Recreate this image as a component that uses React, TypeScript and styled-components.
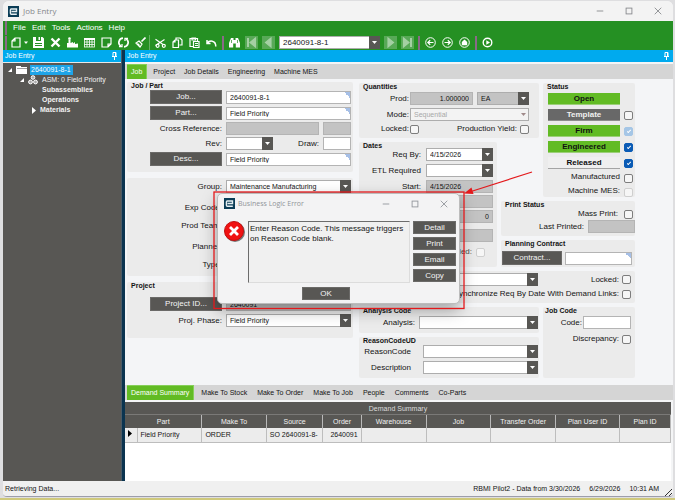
import React from "react";
import styled, { createGlobalStyle, css } from "styled-components";

const GREEN = "#259023";
const LIME = "#62bb24";
const BLUE = "#00aaee";
const DARK = "#585754";
const SANS = '"Liberation Sans", Arial, sans-serif';
const TITLE_FONT = '"Open Sans", "Noto Sans", sans-serif';

const Global = createGlobalStyle`
  *, *::before, *::after { box-sizing: border-box; }
  body { margin: 0; background: #dcdcdc; font: 8px/10px ${SANS}; color: #141414; }
  button, input, select { font: inherit; color: inherit; margin: 0; padding: 0; border-radius: 0; }
`;

/* ---------- window frame ---------- */
const Desktop = styled.div`
  position: relative;
  display: flex;
  min-height: 100vh;
  padding: 1px 2px 3px 3px;
  background: linear-gradient(#dedee0 calc(100% - 2px), #cfc97c calc(100% - 2px));
`;
const AppWindow = styled.main`
  flex: 1;
  min-width: 0;
  display: flex;
  flex-direction: column;
  background: #f4f5f6;
  border-radius: 6px 6px 4px 4px;
  border-bottom: 1px solid #9d9dab;
  overflow: hidden;
`;
const TitleBar = styled.header`
  display: flex;
  align-items: center;
  height: 20px;
  padding: 0 11px 0 5px;
  gap: 4px;
  background: #f3f3f3;
  color: #85878b;
  font-family: ${TITLE_FONT};
`;
const TitleText = styled.h1<{ $small?: boolean }>`
  flex: 1;
  margin: 0;
  font-size: ${(p) => (p.$small ? 7 : 8)}px;
  font-weight: 400;
`;
const CaptionButtons = styled.div`
  display: flex;
  gap: 21px;
`;
const PlainButton = styled.button`
  display: flex;
  align-items: center;
  justify-content: center;
  border: 0;
  background: none;
  color: inherit;
`;

/* ---------- menu and toolbar ---------- */
const MenuBar = styled.nav`
  display: flex;
  align-items: center;
  height: 14px;
  padding: 0 2px;
  background: ${GREEN};
  color: #fff;
`;
const MenuItem = styled.button`
  border: 0;
  background: none;
  padding: 0 0 0 6px;
`;
const Grip = styled.span`
  width: 2px;
  height: 14px;
  background: #8a6a88;
`;
const Separator = styled.span`
  width: 1px;
  height: 15px;
  margin-left: -2px;
  background: #64b062;
`;
const Toolbar = styled.div`
  display: flex;
  align-items: center;
  gap: 4px;
  height: 15px;
  padding-left: 2px;
  background: ${GREEN};
  color: #fff;
`;
const ToolButton = styled(PlainButton)<{ $wide?: boolean; $dim?: boolean }>`
  width: ${(p) => (p.$wide ? 17 : 13)}px;
  height: 13px;
  ${(p) => p.$dim && css`background: #58a957; color: #a4d0a3;`}
`;

/* ---------- body ---------- */
const Body = styled.div`
  flex: 1;
  display: flex;
  min-height: 0;
`;
const Sidebar = styled.aside`
  width: 118px;
  display: flex;
  flex-direction: column;
  background: ${DARK};
`;
const Splitter = styled.div`
  width: 4px;
  background: #0b3450;
  border-left: 1px solid #4a5a66;
`;
const Workspace = styled.section`
  flex: 1;
  min-width: 0;
  display: flex;
  flex-direction: column;
`;
const PaneHeader = styled.div`
  display: flex;
  align-items: center;
  justify-content: space-between;
  height: 12px;
  padding: 0 4px 0 2px;
  background: ${BLUE};
  color: #fff;
  font-size: 7px;
`;
const Tree = styled.ul`
  list-style: none;
  margin: 0;
  padding: 2px 0;
  border-top: 1px solid #e8e8e8;
  color: #f2f2f2;
`;
const TreeRow = styled.li<{ $indent: number; $bold?: boolean }>`
  display: flex;
  align-items: center;
  gap: 4px;
  height: 10px;
  padding-left: ${(p) => p.$indent}px;
  font-weight: ${(p) => (p.$bold ? 700 : 400)};
  font-size: 7px;
`;
const Selected = styled.span`
  padding: 0 2px 0 1px;
  margin-left: -1px;
  background: #1ea4e8;
  color: #fff;
`;

const TabStrip = styled.div<{ $gap: number; $top?: number }>`
  display: flex;
  align-items: center;
  gap: ${(p) => p.$gap}px;
  height: 15px;
  margin-top: ${(p) => p.$top ?? 0}px;
  padding-left: 2px;
  background: #d5d5d5;
`;
const Tab = styled.button<{ $active?: boolean }>`
  border: 0;
  background: none;
  height: 100%;
  font-size: 7px;
  white-space: nowrap;
  ${(p) => p.$active && css`
    background: ${LIME};
    color: #fff;
    padding: 0 4px;
    margin-right: -3px;
    border: solid #86cf58;
    border-width: 1px 1px 0 0;
  `}
`;

/* ---------- form ---------- */
const FormArea = styled.form`
  flex: 1;
  display: flex;
  align-items: flex-start;
  gap: 6px;
  padding: 3px 2px 6px;
  background: #f4f5f7;
`;
const LeftColumn = styled.div`
  width: 226px;
  display: flex;
  flex-direction: column;
  gap: 6px;
`;
const RightGrid = styled.div`
  display: grid;
  grid-template-columns: 138px 38px 92px;
  grid-template-rows: 55px 55px 35px 27px 32px 26px 41px;
  gap: 4px;
  margin-top: 1px;
`;
const Panel = styled.section<{ $area?: string; $pad?: string; $h?: number; $gap?: number }>`
  display: flex;
  flex-direction: column;
  gap: ${(p) => p.$gap ?? 0}px;
  grid-area: ${(p) => p.$area ?? "auto"};
  min-height: ${(p) => p.$h ?? 0}px;
  padding: ${(p) => p.$pad ?? "0"};
  background: #ebebeb;
  border-radius: 2px;
`;
const PanelTitle = styled.h2<{ $x?: number; $h?: number }>`
  margin: 0;
  padding-left: ${(p) => p.$x ?? 4}px;
  height: ${(p) => p.$h ?? 8}px;
  font-size: 7px;
  line-height: 8px;
  font-weight: 700;
  white-space: nowrap;
`;
const Fields = styled.div<{ $cols: string; $rows: string; $gap?: string }>`
  display: grid;
  grid-template-columns: ${(p) => p.$cols};
  grid-template-rows: ${(p) => p.$rows};
  gap: ${(p) => p.$gap ?? "2px 4px"};
  align-items: end;
`;
const Label = styled.label<{ $muted?: boolean }>`
  justify-self: end;
  line-height: 12px;
  white-space: nowrap;
  color: ${(p) => (p.$muted ? "#4a4a4a" : "inherit")};
`;
const Line = styled.div<{ $gap?: number; $end?: boolean; $inset?: number }>`
  display: flex;
  align-items: center;
  justify-content: ${(p) => (p.$end ? "flex-end" : "flex-start")};
  gap: ${(p) => p.$gap ?? 4}px;
  padding-right: ${(p) => p.$inset ?? 0}px;
  min-width: 0;
`;
const DarkButton = styled.button<{ $w?: number; $h?: number }>`
  width: ${(p) => p.$w ?? 72}px;
  height: ${(p) => p.$h ?? 14}px;
  justify-self: end;
  border: 1px solid #6b6a68;
  background: ${DARK};
  color: #f4f4f4;
`;
const Text = styled.input<{ $w?: number; $tag?: boolean; $off?: boolean; $right?: boolean }>`
  width: ${(p) => (p.$w ? p.$w + "px" : "100%")};
  height: 13px;
  min-width: 0;
  padding: 0 3px;
  border: 1px solid #b4b4b4;
  font-size: 7px;
  text-align: ${(p) => (p.$right ? "right" : "left")};
  background: ${(p) => (p.$off ? "#c3c3c3" : "#fff")};
  ${(p) => p.$tag && css`
    background: linear-gradient(to bottom left, #a6bfe6 50%, #fff 50%) top right / 6px 6px no-repeat #fff;
  `}
`;
const ComboBox = styled.span<{ $w?: number; $off?: boolean; $flat?: boolean; $h?: number }>`
  display: flex;
  width: ${(p) => (p.$w ? p.$w + "px" : "100%")};
  height: ${(p) => p.$h ?? 13}px;
  border: 1px solid #adadad;
  background: ${(p) => (p.$off ? "#c3c3c3" : p.$flat ? "#f3f3f3" : "#fff")};
  color: ${(p) => (p.$flat ? "#a8a8a8" : "#141414")};
`;
const ComboSelect = styled.select<{ $big?: boolean }>`
  flex: 1;
  min-width: 0;
  appearance: none;
  border: 0;
  padding-left: 3px;
  background: none;
  font-size: ${(p) => (p.$big ? 8 : 7)}px;
`;
const ComboArrow = styled.span<{ $flat?: boolean }>`
  display: flex;
  align-items: center;
  justify-content: center;
  width: 11px;
  margin: -1px -1px -1px 0;
  background: ${(p) => (p.$flat ? "none" : DARK)};
  color: ${(p) => (p.$flat ? "#a08a8a" : "#fff")};
`;
const Tick = styled.input<{ $faint?: boolean }>`
  appearance: none;
  flex: none;
  align-self: center;
  width: 9px;
  height: 9px;
  border: 1px solid ${(p) => (p.$faint ? "#cfcfcf" : "#7d7d7d")};
  border-radius: 2px;
  background: #f6f6f6;
  &:checked {
    border-color: ${(p) => (p.$faint ? "#a5c6e6" : "#0a5bb5")};
    background: ${(p) => (p.$faint ? "#a5c6e6" : "#0a5bb5")};
  }
  &:checked::after {
    content: "";
    display: block;
    width: 4px;
    height: 2px;
    margin: 2px 0 0 2px;
    border: solid #fff;
    border-width: 0 0 1px 1px;
    transform: rotate(-45deg);
  }
`;
const StatusButton = styled.button<{ $tone: "on" | "off" | "plain" }>`
  width: 72px;
  height: 12px;
  border: 0;
  font-weight: 700;
  background: ${(p) => ({ on: LIME, off: "#686868", plain: "#efefef" })[p.$tone]};
  color: ${(p) => (p.$tone === "off" ? "#f0f0f0" : "#101010")};
  border-bottom: 1px solid ${(p) => ({ on: "#9ccf78", off: "#8d8d8d", plain: "#a4a4a4" })[p.$tone]};
`;

/* ---------- grid ---------- */
const GridPane = styled.div`
  height: 79px;
  margin: 2px 2px 0 0;
  background: #fff;
`;
const Table = styled.table`
  width: 100%;
  table-layout: fixed;
  border-collapse: collapse;
  font-size: 7px;
  caption {
    height: 13px;
    line-height: 13px;
    color: #dcdcdc;
    background: ${DARK};
    border-bottom: 1px solid #7a7977;
  }
  th {
    height: 13px;
    padding: 0;
    font-weight: 400;
    color: #f1f1f1;
    background: ${DARK};
    border-right: 1px solid #b9b9b9;
    white-space: nowrap;
  }
  td {
    height: 14px;
    padding: 0 3px;
    background: #ececec;
    border: solid #bdbdbd;
    border-width: 0 1px 1px 0;
    white-space: nowrap;
    overflow: hidden;
  }
`;
const Col = styled.col<{ $w: number }>`
  width: ${(p) => p.$w}%;
`;
const NumCell = styled.td`
  text-align: right;
`;
const StatusBar = styled.footer`
  display: flex;
  align-items: center;
  gap: 9px;
  height: 15px;
  padding: 0 1px 0 2px;
  background: #f0f0f0;
  font-size: 7px;
`;
const Spring = styled.span`
  flex: 1;
`;
const ResizeGrip = styled.svg`
  margin-left: -4px;
  align-self: flex-end;
`;

/* ---------- dialog ---------- */
const Dialog = styled.section`
  position: absolute;
  left: 217px;
  top: 193px;
  width: 243px;
  height: 111px;
  display: flex;
  flex-direction: column;
  padding: 0 3px 3px 6px;
  border: 1px solid #bcbcbc;
  border-radius: 5px;
  background: #f3f3f4;
  box-shadow: 0 6px 16px rgba(0, 0, 0, 0.35);
`;
const DialogTitle = styled.div`
  display: flex;
  align-items: center;
  gap: 3px;
  height: 19px;
  padding-right: 8px;
  color: #909399;
  font-family: ${TITLE_FONT};
`;
const DialogBody = styled.div`
  display: flex;
  flex: 1;
  gap: 3px;
  padding-top: 8px;
`;
const Message = styled.p`
  flex: 1;
  height: 62px;
  margin: 0;
  padding: 2px 1px;
  background: #f0f0f0;
  border: 1px solid #dcdcdc;
  border-top-color: #6c6c6c;
  border-left-color: #6c6c6c;
`;
const ButtonStack = styled.div`
  display: flex;
  flex-direction: column;
  gap: 3px;
`;
const DialogFoot = styled.div`
  display: flex;
  justify-content: center;
  padding-right: 28px;
`;
const Annotation = styled.svg`
  position: absolute;
  left: 213px;
  top: 165px;
  pointer-events: none;
`;

/* ---------- drawings ---------- */
const Icon = ({ children, size = 11 }: { children: React.ReactNode; size?: number }) => (
  <svg width={size} height={size} viewBox="0 0 11 11" fill="none" stroke="currentColor" strokeWidth="1.2">
    {children}
  </svg>
);
const Logo = () => (
  <svg width="11" height="11" viewBox="0 0 11 11">
    <rect width="11" height="11" fill="#0b3d56" />
    <path d="M3.5 5.5H8.5V3H3.2Q2.4 3 2.4 4V7.2Q2.4 8.2 3.4 8.2H8.8" fill="none" stroke="#e4eef2" strokeWidth="1.4" />
  </svg>
);
const Chevron = () => (
  <svg width="5" height="3" viewBox="0 0 5 3"><path d="M0 0H5L2.5 3Z" fill="currentColor" /></svg>
);
const Pin = () => (
  <svg width="5" height="8" viewBox="0 0 5 8" fill="none" stroke="#fff">
    <path d="M1 .5H4V4.5M1 .5V4.5M0 4.5H5M2.5 5V8" /><path d="M3.5 1V4" />
  </svg>
);
const Expanded = () => (
  <svg width="4" height="4" viewBox="0 0 4 4"><path d="M4 0V4H0Z" fill="#fff" /></svg>
);
const Collapsed = () => (
  <svg width="4" height="7" viewBox="0 0 4 7"><path d="M0 0L4 3.5L0 7Z" fill="#fff" /></svg>
);
const WindowButtons = () => (
  <CaptionButtons>
    <PlainButton type="button" aria-label="Minimize"><Icon size={8}><path d="M1 5.5H10" /></Icon></PlainButton>
    <PlainButton type="button" aria-label="Maximize"><Icon size={8}><rect x="1.5" y="1.5" width="8" height="8" /></Icon></PlainButton>
    <PlainButton type="button" aria-label="Close"><Icon size={8}><path d="M1 1L10 10M10 1L1 10" /></Icon></PlainButton>
  </CaptionButtons>
);

const fileTools: [string, React.ReactNode][] = [
  ["Save", <g fill="currentColor" stroke="none"><path d="M0 0H3V4H8V0H9.5L11 1.5V11H0Z" /><path d="M5.5 0H7V3H5.5Z" /><path d="M2 6.5H9M2 8.5H9" stroke={GREEN} /></g>],
  ["Delete", <path d="M1.5 1.5L9.5 9.5M9.5 1.5L1.5 9.5" strokeWidth="2.4" />],
  ["Plant", <g fill="currentColor" stroke="none"><path d="M0 10.5V6H1.5V2.5H3.5V6L6 5V6.5L8 5V7L11 6.5V10.5Z" /><circle cx="2.5" cy="1.5" r="1.3" /></g>],
  ["Schedule", <g strokeWidth=".8"><rect x=".5" y="1.5" width="10" height="8.5" /><path d="M0 2H11" strokeWidth="2" /><path d="M.5 5H10.5M.5 7.5H10.5M3 2V10M5.5 2V10M8 2V10" /></g>],
  ["Note", <path d="M1 1H10V7L7 10H1ZM10 7H7V10" />],
  ["Refresh", <g strokeWidth="1.7"><path d="M5 1.2A4.3 4.3 0 0 0 3 9.2M6 9.8A4.3 4.3 0 0 0 8 1.8" /><path d="M1 9.7H4V7M10 1.3H7V4" strokeWidth="1.3" /></g>],
  ["Clear", <g><path d="M10.5 .5L6.5 4.5" strokeWidth="1.7" /><path d="M4 4L7 7L5 10L1 6Z" /><path d="M2.5 6.5L4.5 8.5" /></g>],
];
const editTools: [string, React.ReactNode][] = [
  ["Cut", <g><path d="M.5 2.2L8 7.5M.5 8.5L9.5 2.5" /><circle cx="8.8" cy="8.8" r="1.5" /><circle cx="2.6" cy="8.8" r="1.5" /></g>],
  ["Copy", <path d="M4 3V1H8L10 3V8H7.5M1 5L3 3H6.5V10.5H1ZM3 3V5H1" />],
  ["Paste", <g><path d="M4 9.5H1V1.5H8.5V4M3 1H6.5V3H3Z" /><path d="M4.5 4.5H10V10.5H4.5ZM6 6.5H9M6 8.5H9" /></g>],
  ["Undo", <path d="M1 3V6.5H4.5M1.5 6C3 3.5 9.8 2.5 9.8 9.5" strokeWidth="1.5" />],
];

/* ---------- controls ---------- */
const Combo = ({ id, value = "", label, w, h, off, flat, big }: {
  id: string; value?: string; label?: string; w?: number; h?: number; off?: boolean; flat?: boolean; big?: boolean;
}) => (
  <ComboBox $w={w} $h={h} $off={off} $flat={flat}>
    <ComboSelect id={id} aria-label={label} $big={big}><option>{value}</option></ComboSelect>
    <ComboArrow $flat={flat}><Chevron /></ComboArrow>
  </ComboBox>
);

const statuses: { name: string; tone: "on" | "off" | "plain"; tick: boolean; checked?: boolean; faint?: boolean }[] = [
  { name: "Open", tone: "on", tick: false },
  { name: "Template", tone: "off", tick: true },
  { name: "Firm", tone: "on", tick: true, checked: true, faint: true },
  { name: "Engineered", tone: "on", tick: true, checked: true },
  { name: "Released", tone: "plain", tick: true, checked: true },
];

const JobForm = () => (
  <FormArea>
    <LeftColumn>
      <Panel $h={90}>
        <PanelTitle>Job / Part</PanelTitle>
        <Fields $cols="95px 125px" $rows="14px 14px 13px 13px 14px">
          <DarkButton type="button">Job...</DarkButton>
          <Text aria-label="Job" $tag defaultValue="2640091-8-1" />
          <DarkButton type="button">Part...</DarkButton>
          <Text aria-label="Part" $tag defaultValue="Field Priority" />
          <Label htmlFor="xref">Cross Reference:</Label>
          <Line><Text id="xref" $w={93} $off readOnly /><Text aria-label="Cross reference revision" $w={28} $off readOnly /></Line>
          <Label htmlFor="rev">Rev:</Label>
          <Line $end>
            <Combo id="rev" w={47} /><Spring />
            <Label htmlFor="draw">Draw:</Label><Text id="draw" $w={28} />
          </Line>
          <DarkButton type="button">Desc...</DarkButton>
          <Text aria-label="Description" $tag defaultValue="Field Priority" />
        </Fields>
      </Panel>
      <Panel $h={98} $pad="1px 0 0">
        <Fields $cols="95px 125px" $rows="14px 19px 16px 19px 16px">
          <Label htmlFor="group">Group:</Label><Combo id="group" value="Maintenance Manufacturing" />
          <Label htmlFor="exp">Exp Code:</Label><Combo id="exp" />
          <Label htmlFor="team">Prod Team:</Label><Combo id="team" />
          <Label htmlFor="planner">Planner:</Label><Combo id="planner" />
          <Label htmlFor="type">Type:</Label><Combo id="type" />
        </Fields>
      </Panel>
      <Panel $h={56}>
        <PanelTitle $h={15}>Project</PanelTitle>
        <Fields $cols="95px 125px" $rows="14px 14px">
          <DarkButton type="button">Project ID...</DarkButton>
          <Text aria-label="Project ID" $off defaultValue="2640091" />
          <Label htmlFor="phase">Proj. Phase:</Label><Combo id="phase" value="Field Priority" />
        </Fields>
      </Panel>
    </LeftColumn>

    <RightGrid>
      <Panel $area="1 / 1 / 2 / 3">
        <PanelTitle $h={9}>Quantities</PanelTitle>
        <Fields $cols="50px 119px" $rows="13px 13px 11px" $gap="3px 1px">
          <Label htmlFor="prod">Prod:</Label>
          <Line><Text id="prod" $w={63} $off $right readOnly defaultValue="1.000000" /><Combo id="uom" label="Unit" w={52} off value="EA" /></Line>
          <Label htmlFor="mode">Mode:</Label><Combo id="mode" flat value="Sequential" />
          <Label htmlFor="locked">Locked:</Label>
          <Line $gap={3}>
            <Tick type="checkbox" id="locked" /><Spring />
            <Label htmlFor="yield">Production Yield:</Label><Tick type="checkbox" id="yield" />
          </Line>
        </Fields>
      </Panel>

      <Panel $area="2 / 1 / 5 / 2">
        <PanelTitle $h={6}>Dates</PanelTitle>
        <Fields $cols="62px 67px" $rows="13px 14px 14px 13px 13px 17px 14px" $gap="2px 5px">
          <Label htmlFor="req">Req By:</Label><Combo id="req" value="4/15/2026" />
          <Label htmlFor="etl">ETL Required</Label><Combo id="etl" />
          <Label htmlFor="start">Start:</Label><Text id="start" $off readOnly defaultValue="4/15/2026" />
          <span /><Text aria-label="Due" $off readOnly />
          <span /><Text aria-label="Days" $off $right readOnly defaultValue="0" />
          <span /><Text aria-label="End" $off readOnly />
          <span />
          <Line $end $inset={8}><Label htmlFor="sched" $muted>Scheduled:</Label><Tick type="checkbox" id="sched" $faint /></Line>
        </Fields>
      </Panel>

      <Panel $area="1 / 3 / 3 / 4">
        <PanelTitle $h={10}>Status</PanelTitle>
        <Fields $cols="77px 9px" $rows="repeat(5, 12px) 10px 10px" $gap="4px 4px">
          {statuses.map((s) => (
            <React.Fragment key={s.name}>
              <Line $end><StatusButton type="button" $tone={s.tone}>{s.name}</StatusButton></Line>
              {s.tick ? <Tick type="checkbox" aria-label={s.name} defaultChecked={s.checked} $faint={s.faint} /> : <span />}
            </React.Fragment>
          ))}
          <Label htmlFor="mfg">Manufactured</Label><Tick type="checkbox" id="mfg" />
          <Label htmlFor="mes">Machine MES:</Label><Tick type="checkbox" id="mes" $faint />
        </Fields>
      </Panel>

      <Panel $area="3 / 2 / 4 / 4">
        <PanelTitle $h={7}>Print Status</PanelTitle>
        <Line $end $gap={6} $inset={2}><Label htmlFor="mass">Mass Print:</Label><Tick type="checkbox" id="mass" /></Line>
        <Line $end><Label htmlFor="last">Last Printed:</Label><Text id="last" $w={47} $off readOnly /></Line>
      </Panel>

      <Panel $area="4 / 2 / 5 / 4">
        <PanelTitle $h={11}>Planning Contract</PanelTitle>
        <Line $end $gap={3} $inset={3}><DarkButton type="button" $w={60}>Contract...</DarkButton><Text aria-label="Contract" $tag $w={67} /></Line>
      </Panel>

      <Panel $area="5 / 1 / 6 / 4" $pad="2px 4px 0 67px" $gap={2}>
        <Line $gap={3}><Combo id="site" label="Warehouse" w={112} /><Spring /><Label htmlFor="lock2">Locked:</Label><Tick type="checkbox" id="lock2" /></Line>
        <Line $end $gap={3}><Label htmlFor="sync">Synchronize Req By Date With Demand Links:</Label><Tick type="checkbox" id="sync" /></Line>
      </Panel>

      <Panel $area="6 / 1 / 7 / 3">
        <PanelTitle $h={9}>Analysis Code</PanelTitle>
        <Fields $cols="56px 119px" $rows="13px">
          <Label htmlFor="analysis">Analysis:</Label><Combo id="analysis" />
        </Fields>
      </Panel>

      <Panel $area="7 / 1 / 8 / 3">
        <PanelTitle $h={8}>ReasonCodeUD</PanelTitle>
        <Fields $cols="52px 115px" $rows="13px 14px" $gap="2px 12px">
          <Label htmlFor="reason">ReasonCode</Label><Combo id="reason" />
          <Label htmlFor="rdesc">Description</Label><Combo id="rdesc" />
        </Fields>
      </Panel>

      <Panel $area="6 / 3 / 8 / 4" $pad="0 4px 0 0">
        <PanelTitle $h={9} $x={2}>Job Code</PanelTitle>
        <Panel $gap={4}>
          <Line $end $gap={1}><Label htmlFor="code">Code:</Label><Text id="code" $w={48} /></Line>
          <Line $end $gap={3}><Label htmlFor="disc">Discrepancy:</Label><Tick type="checkbox" id="disc" /></Line>
        </Panel>
      </Panel>
    </RightGrid>
  </FormArea>
);

const columns: [string, number][] = [
  ["Make To", 11.8], ["Source", 10.4], ["Order", 7], ["Warehouse", 11.9],
  ["Job", 11.9], ["Transfer Order", 11.8], ["Plan User ID", 11.8], ["Plan ID", 9.3],
];

export default function App() {
  return (
    <Desktop>
      <Global />
      <AppWindow>
        <TitleBar><Logo /><TitleText>Job Entry</TitleText><WindowButtons /></TitleBar>
        <MenuBar>
          <Grip />
          {["File", "Edit", "Tools", "Actions", "Help"].map((m) => <MenuItem key={m} type="button">{m}</MenuItem>)}
        </MenuBar>
        <Toolbar>
          <Grip />
          <ToolButton $wide aria-label="New">
            <svg width="17" height="11" viewBox="0 0 17 11" fill="none" stroke="currentColor" strokeWidth="1.2">
              <path d="M1 4L4 1H9V10H1ZM4 1V4H1" /><path d="M13 4.5H17L15 7Z" fill="currentColor" stroke="none" />
            </svg>
          </ToolButton>
          {fileTools.map(([n, d]) => <ToolButton key={n} aria-label={n}><Icon>{d}</Icon></ToolButton>)}
          <Separator />
          {editTools.map(([n, d]) => <ToolButton key={n} aria-label={n}><Icon>{d}</Icon></ToolButton>)}
          <Grip />
          <ToolButton aria-label="Search">
            <Icon><g fill="currentColor" stroke="none"><path d="M2 1H4.5V3H6.5V1H9L11 6V10.5H6.8V6.5H4.2V10.5H0V6Z" /><path d="M2.5 3V6M8.5 3V6" stroke={GREEN} strokeWidth=".7" /></g></Icon>
          </ToolButton>
          <ToolButton $dim aria-label="First"><Icon><path d="M2 1V10" strokeWidth="2" /><path d="M9.5 1V10L4 5.5Z" fill="currentColor" /></Icon></ToolButton>
          <ToolButton $dim aria-label="Previous"><Icon><path d="M8 1V10L2.5 5.5Z" fill="currentColor" /></Icon></ToolButton>
          <Combo id="record" label="Job" w={101} value="2640091-8-1" big />
          <ToolButton $dim aria-label="Next"><Icon><path d="M3 1V10L8.5 5.5Z" fill="currentColor" /></Icon></ToolButton>
          <ToolButton $dim aria-label="Last"><Icon><path d="M9 1V10" strokeWidth="2" /><path d="M1.5 1V10L7 5.5Z" fill="currentColor" /></Icon></ToolButton>
          <Grip />
          <ToolButton aria-label="Back"><Icon><circle cx="5.5" cy="5.5" r="4.8" strokeWidth="1" /><path d="M8.5 5.5H3M5.2 3.2L2.8 5.5L5.2 7.8" /></Icon></ToolButton>
          <ToolButton aria-label="Forward"><Icon><circle cx="5.5" cy="5.5" r="4.8" strokeWidth="1" /><path d="M2.5 5.5H8M5.8 3.2L8.2 5.5L5.8 7.8" /></Icon></ToolButton>
          <ToolButton aria-label="Home"><Icon><circle cx="5.5" cy="5.5" r="4.8" strokeWidth="1" /><path d="M2.8 5L5.5 2.5L8.2 5V8.2H2.8Z" fill="currentColor" stroke="none" /></Icon></ToolButton>
          <Grip />
          <ToolButton aria-label="Run"><Icon><circle cx="5.5" cy="5.5" r="4.3" strokeWidth="1.4" /><path d="M4.3 3.2L8 5.5L4.3 7.8Z" fill="currentColor" stroke="none" /></Icon></ToolButton>
        </Toolbar>

        <Body>
          <Sidebar>
            <PaneHeader>Job Entry<Pin /></PaneHeader>
            <Tree>
              <TreeRow $indent={5}><Expanded />
                <svg width="11" height="8" viewBox="0 0 11 8"><path d="M0 0H5V1H11V8H0Z" fill="#fff" /><path d="M1 2.5H11" stroke="#777" strokeWidth=".7" /></svg>
                <Selected>2640091-8-1</Selected>
              </TreeRow>
              <TreeRow $indent={17}><Expanded />
                <svg width="10" height="10" viewBox="0 0 10 10" fill="#aaa" stroke="#fff"><circle cx="5" cy="2.5" r="1.8" /><circle cx="2.5" cy="7" r="1.9" /><circle cx="7.5" cy="7" r="1.9" /></svg>
                <span>ASM: 0 Field Priority</span>
              </TreeRow>
              <TreeRow $indent={39} $bold>Subassemblies</TreeRow>
              <TreeRow $indent={39} $bold>Operations</TreeRow>
              <TreeRow $indent={29} $bold><Collapsed />Materials</TreeRow>
            </Tree>
          </Sidebar>
          <Splitter />
          <Workspace>
            <PaneHeader>Job Entry<Pin /></PaneHeader>
            <TabStrip $gap={9} $top={2}>
              <Tab $active>Job</Tab><Tab>Project</Tab><Tab>Job Details</Tab><Tab>Engineering</Tab><Tab>Machine MES</Tab>
            </TabStrip>
            <JobForm />
            <TabStrip $gap={10}>
              <Tab $active>Demand Summary</Tab>
              {["Make To Stock", "Make To Order", "Make To Job", "People", "Comments", "Co-Parts"].map((t) => <Tab key={t}>{t}</Tab>)}
            </TabStrip>
            <GridPane>
              <Table>
                <caption>Demand Summary</caption>
                <colgroup><Col $w={2.2} /><Col $w={11.9} />{columns.map(([n, w]) => <Col key={n} $w={w} />)}</colgroup>
                <thead><tr><th colSpan={2}>Part</th>{columns.map(([n]) => <th key={n}>{n}</th>)}</tr></thead>
                <tbody>
                  <tr>
                    <td><svg width="4" height="7" viewBox="0 0 4 7"><path d="M0 0L4 3.5L0 7Z" /></svg></td>
                    <td>Field Priority</td><td>ORDER</td><td>SO 2640091-8-</td><NumCell>2640091</NumCell>
                    <td /><td /><td /><td /><td />
                  </tr>
                </tbody>
              </Table>
            </GridPane>
          </Workspace>
        </Body>
        <StatusBar>
          <span>Retrieving Data...</span><Spring />
          <span>RBMI Pilot2 - Data from 3/30/2026</span>
          <span>6/29/2026</span>
          <span>10:31 AM</span>
          <ResizeGrip width="8" height="8" viewBox="0 0 8 8" stroke="#333"><path d="M1 8L8 1M5 8L8 5" /></ResizeGrip>
        </StatusBar>
      </AppWindow>

      <Dialog role="dialog" aria-label="Business Logic Error">
        <DialogTitle><Logo /><TitleText as="h2" $small>Business Logic Error</TitleText><WindowButtons /></DialogTitle>
        <DialogBody>
          <svg width="21" height="21" viewBox="0 0 21 21">
            <circle cx="11" cy="11" r="10" fill="#777" /><circle cx="10" cy="10" r="9.5" fill="#f01212" stroke="#c01010" />
            <path d="M6 6L14 14M14 6L6 14" stroke="#fff" strokeWidth="2.8" />
          </svg>
          <Message>Enter Reason Code. This message triggers on Reason Code blank.</Message>
          <ButtonStack>
            {["Detail", "Print", "Email", "Copy"].map((b) => <DarkButton key={b} type="button" $w={43} $h={13}>{b}</DarkButton>)}
          </ButtonStack>
        </DialogBody>
        <DialogFoot><DarkButton type="button" $w={48} $h={13}>OK</DarkButton></DialogFoot>
      </Dialog>
      <Annotation width="325" height="146" viewBox="0 0 325 146" fill="none" stroke="#e3191c">
        <rect x="1" y="27" width="250" height="116.5" strokeWidth="1.3" />
        <path d="M319 7L258 26.5" strokeWidth="1.2" /><path d="M251 28.5L258.5 22.5L260.5 29Z" fill="#e3191c" stroke="none" />
      </Annotation>
    </Desktop>
  );
}
